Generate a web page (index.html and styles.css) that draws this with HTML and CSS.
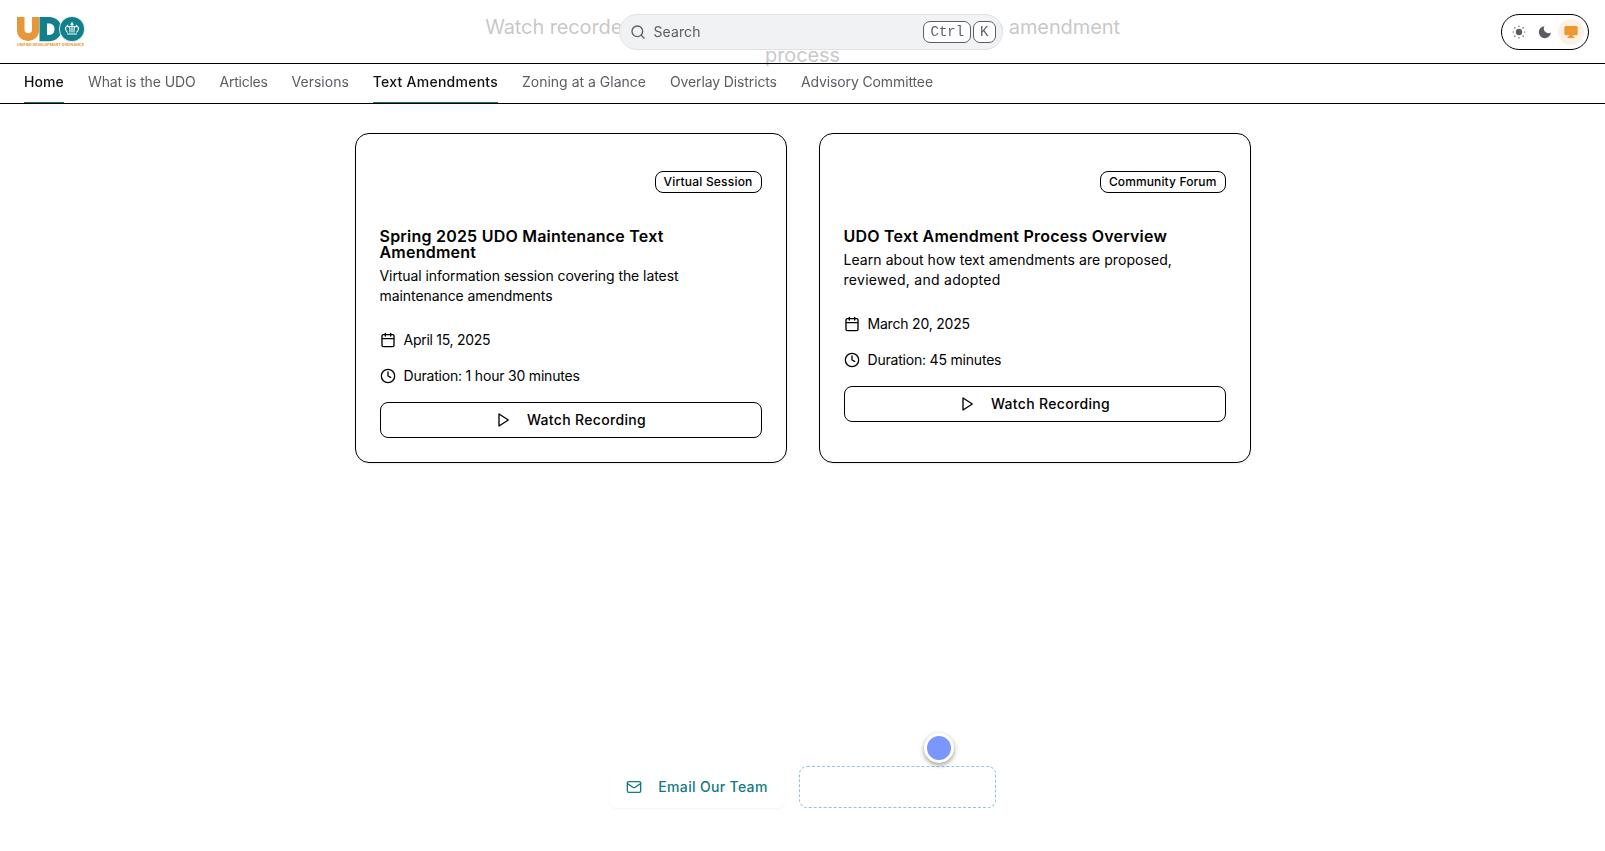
FILE: index.html
```html
<!DOCTYPE html>
<html lang="en">
<head>
<meta charset="utf-8">
<title>UDO Text Amendments</title>
<link rel="stylesheet" href="styles.css">
</head>
<body>
<svg class="defs" aria-hidden="true">
  <symbol id="calendar" viewBox="0 0 24 24"><path d="M8 2v4M16 2v4M3 10h18"/><rect x="3" y="4" width="18" height="18" rx="2"/></symbol>
  <symbol id="clock" viewBox="0 0 24 24"><circle cx="12" cy="12" r="10"/><path d="M12 6v6l4 2"/></symbol>
  <symbol id="play" viewBox="0 0 24 24"><path d="M6 3l14 9-14 9z"/></symbol>
  <symbol id="mail" viewBox="0 0 24 24"><rect x="2" y="4" width="20" height="16" rx="2"/><path d="m22 7-8.97 5.7a1.94 1.94 0 0 1-2.06 0L2 7"/></symbol>
  <symbol id="search" viewBox="0 0 24 24"><circle cx="11" cy="11" r="8"/><path d="m21 21-4.3-4.3"/></symbol>
</svg>
<div class="topbar">
  <header class="header">
    <svg class="logo" viewBox="0 0 70 34" width="70" height="34">
      <path fill="#e8963a" d="M1 2h7.500v12.500a3.500 3.500 0 0 0 7.500 0V2h7v13.500a11 10.500 0 0 1-22 0z"/>
      <path fill="#11808a" fill-rule="evenodd" d="M23.500 2H33c7.500 0 12.500 5 12.500 12S40.500 26.300 33 26.300h-9.500zM31 8.500v11.500h2c3.500 0 5.500-2.300 5.500-5.700S36.500 8.500 33 8.500z"/>
      <circle cx="56" cy="14" r="12.600" fill="#11808a" stroke="#fff" stroke-width="0.800"/>
      <g fill="none" stroke="#fff" stroke-width="1.100"><path d="M51.500 17.500c-3-3-2.500-6 .2-6 2.600 0 2.300 3 2.300 6M60.500 17.500c3-3 2.500-6-.2-6-2.600 0-2.300 3-2.300 6M56 8v9.500M54.300 9.300h3.400M53.500 11.500h5M51 19h10"/></g>
      <g fill="#fff"><circle cx="56" cy="8.300" r="1"/><circle cx="51.500" cy="10.500" r=".8"/><circle cx="60.500" cy="10.500" r=".8"/><circle cx="49.600" cy="13" r=".7"/><circle cx="62.400" cy="13" r=".7"/></g>
      <text x="1" y="31" textLength="67" lengthAdjust="spacingAndGlyphs" class="logo-tag">UNIFIED DEVELOPMENT ORDINANCE</text>
    </svg>
    <div class="search">
      <svg class="icon"><use href="#search"/></svg><span>Search</span>
      <kbd class="first">Ctrl</kbd><kbd>K</kbd>
    </div>
    <div class="themes">
      <span class="theme"><svg width="14" height="14" viewBox="0 0 14 14" fill="#5b5d63"><circle cx="7" cy="7" r="3.200"/><g stroke="#5b5d63" stroke-width="1.200" stroke-linecap="round"><path d="M7 1v.4M7 12.600v.4M1 7h.4M12.600 7h.4M2.700 2.700l.3.300M11 11l.3.300M2.700 11.300l.3-.3M11 3l.3-.3"/></g></svg></span>
      <span class="theme"><svg width="14" height="14" viewBox="0 0 14 14" fill="#5b5d63"><path d="M6.500 1.200A4.600 4.600 0 0 0 12.800 7.500 6 6 0 1 1 6.500 1.200z"/></svg></span>
      <span class="theme active"><svg width="14" height="14" viewBox="0 0 14 14" fill="#ee9732"><path d="M1.800 1h10.400a1.500 1.500 0 0 1 1.500 1.500v6.300a1.500 1.500 0 0 1-1.500 1.500H8.700l.3 1.200h1a.7.7 0 0 1 0 1.400H4a.7.7 0 0 1 0-1.400h1l.3-1.200H1.800A1.500 1.500 0 0 1 .3 8.800V2.500A1.500 1.500 0 0 1 1.800 1z"/></svg></span>
    </div>
  </header>
  <nav class="nav">
    <a class="current home">Home</a><a class="snug">What is the UDO</a><a class="tight">Articles</a><a>Versions</a><a class="current wide">Text Amendments</a><a>Zoning at a Glance</a><a class="snug">Overlay Districts</a><a class="snug">Advisory Committee</a>
  </nav>
</div>
<main>
  <p class="intro">Watch recorded information sessions to learn about the amendment process</p>
  <div class="cards">
    <article class="card">
      <div class="card-top"><span class="badge">Virtual Session</span></div>
      <h3>Spring 2025 UDO Maintenance Text<br>Amendment</h3>
      <p class="desc session">Virtual information session covering the latest maintenance amendments</p>
      <div class="meta date"><svg class="icon"><use href="#calendar"/></svg>April 15, 2025</div>
      <div class="meta"><svg class="icon"><use href="#clock"/></svg>Duration: 1 hour 30 minutes</div>
      <a class="button"><svg class="icon"><use href="#play"/></svg>Watch Recording</a>
    </article>
    <article class="card">
      <div class="card-top"><span class="badge forum">Community Forum</span></div>
      <h3>UDO Text Amendment Process Overview</h3>
      <p class="desc overview">Learn about how text amendments are proposed, <span class="wide">reviewed, and adopted</span></p>
      <div class="meta"><svg class="icon"><use href="#calendar"/></svg>March 20, 2025</div>
      <div class="meta"><svg class="icon"><use href="#clock"/></svg>Duration: 45 minutes</div>
      <a class="button"><svg class="icon"><use href="#play"/></svg>Watch Recording</a>
    </article>
  </div>
  <section class="contact">
    <a class="email"><svg class="icon"><use href="#mail"/></svg>Email Our Team</a>
    <div class="dashed"><span class="dot"></span></div>
  </section>
</main>
</body>
</html>
```
FILE: styles.css
```css
* { box-sizing: border-box; }
body { margin: 0; height: 851px; overflow: hidden; background: #fff; color: #000; font: 14px/20px Inter, sans-serif; }
.defs { position: absolute; width: 0; height: 0; }
.icon { width: 16px; height: 16px; flex: none; fill: none; stroke: currentColor; stroke-width: 2; stroke-linecap: round; stroke-linejoin: round; }
.topbar { position: fixed; top: 0; left: 0; right: 0; z-index: 2; background: rgba(255,255,255,.6); }
.header { display: grid; grid-template-columns: 1fr 384px 1fr; align-items: center; height: 64px; padding: 0 16px 0 32px; border-bottom: 1px solid #000; }
.logo { margin-left: -16px; overflow: visible; }
.logo-tag { font: 700 3.6px Inter, sans-serif; fill: #e8963a; }
.search { display: flex; align-items: center; height: 36px; padding: 0 6px 0 10px; border: 1px solid #e0e1e4; border-radius: 18px; background: #f1f2f4; color: #5b5d63; }
.search span { margin-left: 8px; letter-spacing: .1px; }
kbd { height: 22px; padding: 0 6px; border: 1px solid #5b5d63; border-radius: 7px; background: #fff; font: 14px/20px "Liberation Mono", monospace; }
kbd.first { margin: 0 2px 0 auto; }
.themes { justify-self: end; display: flex; align-items: center; height: 36px; padding: 0 4px; border: 1px solid #000; border-radius: 18px; background: #fff; }
.theme { display: grid; place-items: center; width: 26px; height: 26px; border-radius: 50%; }
.active { background: #fdf1e6; }
.nav { display: flex; gap: 24px; height: 40px; padding: 0 24px; border-bottom: 1px solid #000; color: #5b5d63; }
.nav a { height: 39px; padding-top: 8px; }
.nav .current { color: #111; font-weight: 500; border-bottom: 1px solid #117566; }
.nav .home { letter-spacing: .1px; }
.nav .snug { letter-spacing: -.12px; }
.nav .tight { letter-spacing: -.25px; }
.wide { letter-spacing: .28px; }
.nav .wide { letter-spacing: .25px; }
.intro { width: 672px; height: 56px; margin: 13px auto 64px; font-size: 20px; line-height: 28px; text-align: center; letter-spacing: -.11px; color: #757575; }
main { display: flow-root; }
.cards { display: grid; grid-template-columns: 1fr 1fr; gap: 32px; width: 896px; margin: 0 auto; }
.card { min-height: 330px; padding: 24px; border: 1px solid #000; border-radius: 14px; box-shadow: 0 1px 2px rgba(0,0,0,.08); }
.card-top { display: flex; justify-content: flex-end; padding: 13px 0 35px; }
.badge { height: 22px; padding: 2px 8px; border: 1px solid #000; border-radius: 8px; font-size: 12px; line-height: 16px; font-weight: 500; letter-spacing: .2px; }
.forum { letter-spacing: .13px; }
h3 { margin: 0 0 6px; font-size: 16px; line-height: 16px; font-weight: 600; letter-spacing: .22px; }
.desc { margin: 0 0 24px; }
.session { letter-spacing: -.07px; }
.overview { letter-spacing: .06px; }
.meta { display: flex; align-items: center; gap: 8px; margin-bottom: 16px; letter-spacing: -.2px; }
.date { letter-spacing: -.28px; }
.button { display: flex; align-items: center; justify-content: center; gap: 16px; height: 36px; border: 1px solid #000; border-radius: 8px; font-weight: 500; letter-spacing: .33px; }
.contact { display: flex; justify-content: center; gap: 14px; margin-top: 303px; }
.email { display: flex; align-items: center; gap: 16px; height: 42px; padding: 0 17px; border-radius: 8px; color: #127a80; font-weight: 500; letter-spacing: .33px; box-shadow: 0 1px 2px rgba(0,0,0,.05); }
.dashed { position: relative; width: 197px; height: 42px; border: 1px dashed #93c4d6; border-radius: 8px; }
.dot { position: absolute; left: 124px; top: -34px; width: 30px; height: 30px; border: 3px solid #fff; border-radius: 50%; background: #7b96ff; box-shadow: 0 2px 5px rgba(0,0,0,.4); }
```
